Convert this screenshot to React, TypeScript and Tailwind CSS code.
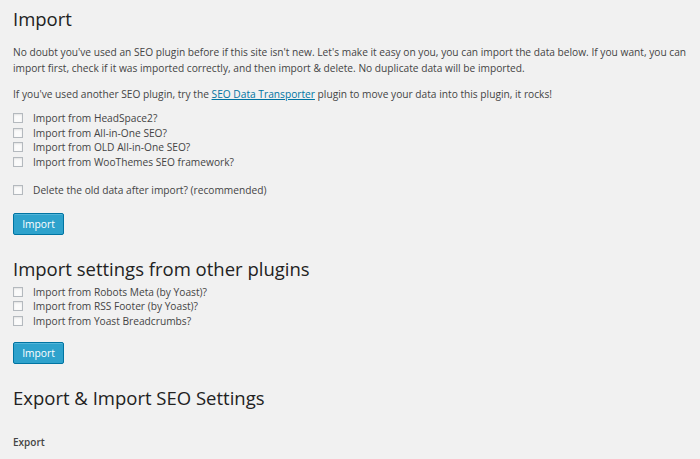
export default function App() {
  const imports = [
    'Import from HeadSpace2?',
    'Import from All-in-One SEO?',
    'Import from OLD All-in-One SEO?',
    'Import from WooThemes SEO framework?',
  ];
  const others = [
    'Import from Robots Meta (by Yoast)?',
    'Import from RSS Footer (by Yoast)?',
    'Import from Yoast Breadcrumbs?',
  ];

  const Check = ({ label }: { label: string }) => (
    <label className="flex items-center h-[14.5px]">
      <span className="w-[10px] h-[10px] border border-[#b4b9be] bg-[#fbfbfb] shadow-[inset_0_1px_2px_rgba(0,0,0,0.1)] mr-[10px] shrink-0" />
      <span>{label}</span>
    </label>
  );

  const Button = () => (
    <button className="h-[22px] w-[51px] rounded-[2px] bg-[#2ea2cc] border border-[#0074a2] text-white text-[10.25px] shadow-[inset_0_1px_0_rgba(120,200,230,0.5)]">
      Import
    </button>
  );

  return (
    <div className="w-[700px] h-[459px] overflow-hidden bg-[#f1f1f1] text-[#444] text-[10.2px] leading-[16px] pl-[13px] pr-[4px] font-['Open_Sans',sans-serif]">
      <h1 className="text-[18.5px] leading-[24px] text-[#222] pt-[7px]">Import</h1>
      <p className="mt-[13px]">
        No doubt you've used an SEO plugin before if this site isn't new. Let's make it easy on you, you can import the data below. If you want, you can
        import first, check if it was imported correctly, and then import &amp; delete. No duplicate data will be imported.
      </p>
      <p className="mt-[10px]">
        If you've used another SEO plugin, try the{' '}
        <a className="text-[#0074a2] underline">SEO Data Transporter</a> plugin to move your data into this plugin, it rocks!
      </p>
      <div className="mt-[9px]">
        {imports.map((l) => (
          <Check key={l} label={l} />
        ))}
      </div>
      <div className="mt-[14px]">
        <Check label="Delete the old data after import? (recommended)" />
      </div>
      <div className="mt-[15px]">
        <Button />
      </div>
      <h2 className="text-[18.5px] leading-[24px] text-[#222] mt-[22px]">Import settings from other plugins</h2>
      <div className="mt-[4px]">
        {others.map((l) => (
          <Check key={l} label={l} />
        ))}
      </div>
      <div className="mt-[14px]">
        <Button />
      </div>
      <h2 className="text-[18.5px] leading-[24px] text-[#222] mt-[22px]">Export &amp; Import SEO Settings</h2>
      <h3 className="font-semibold mt-[24px] text-[10px]">Export</h3>
    </div>
  );
}
